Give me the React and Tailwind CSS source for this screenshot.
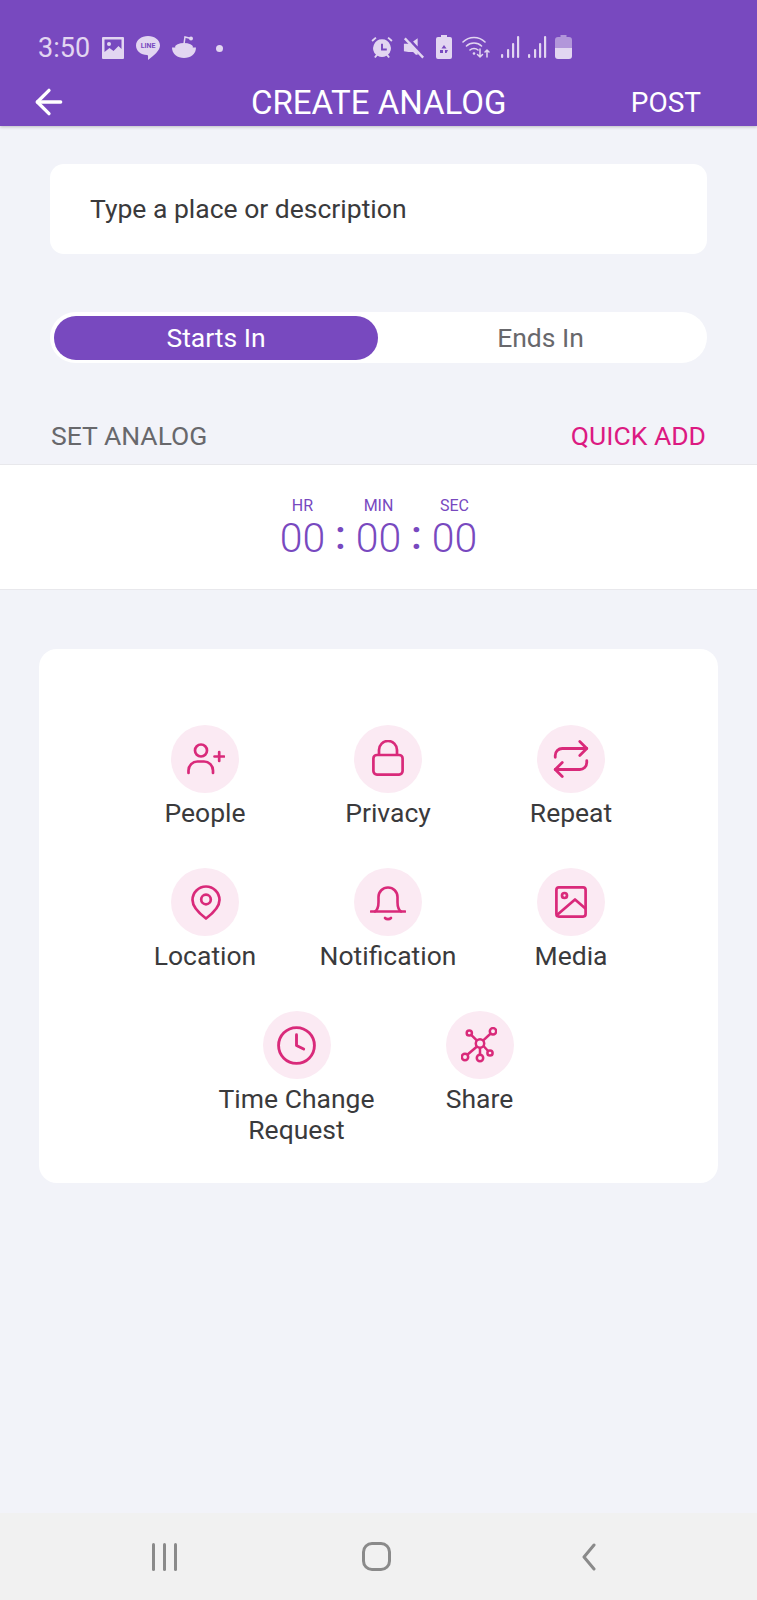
import { ArrowLeft, Clock, Repeat } from "lucide-react";

const ROBOTO = "font-['Roboto',sans-serif]";

function ShareIcon(props) {
  return (
    <svg viewBox="0 0 36 36" fill="none" stroke="currentColor" strokeWidth="2.500" {...props}>
      <circle cx="19" cy="16.500" r="4.200" />
      <circle cx="8.300" cy="6" r="2.600" />
      <circle cx="32" cy="4.300" r="3.200" />
      <circle cx="4" cy="30" r="3.200" />
      <circle cx="19" cy="31" r="3.200" />
      <circle cx="29" cy="26" r="2.600" />
      <path d="M10.200 7.800l5.800 5.800M29.700 6.500l-7.700 7.200M16 19.500L6.300 27.800M19 20.700V27.800M22.500 19l4.600 5" />
    </svg>
  );
}

function PeopleIcon(props) {
  return (
    <svg viewBox="0 0 38 32" fill="none" stroke="currentColor" strokeWidth="2.700" strokeLinecap="round" {...props}>
      <circle cx="14" cy="7.500" r="6" />
      <path d="M1.500 30v-2.500a9 9 0 0 1 9-9h6.500a9 9 0 0 1 9 9V30" />
      <path d="M27.500 13.500h9.500M32.200 9v9" />
    </svg>
  );
}

function LockIcon(props) {
  return (
    <svg viewBox="0 0 32 36" fill="none" stroke="currentColor" strokeWidth="2.700" {...props}>
      <rect x="1.400" y="15" width="29.200" height="19.600" rx="3.500" />
      <path d="M7 15V10a9 9 0 0 1 18 0v5" />
    </svg>
  );
}

function PinIcon(props) {
  return (
    <svg viewBox="0 0 30 35" fill="none" stroke="currentColor" strokeWidth="2.700" strokeLinejoin="round" {...props}>
      <path d="M15 33.500C7 27.500 1.500 21.500 1.500 15a13.500 13.500 0 0 1 27 0c0 6.500-5.500 12.500-13.500 18.500z" />
      <circle cx="15" cy="14.500" r="4.800" />
    </svg>
  );
}

function NotificationIcon(props) {
  return (
    <svg viewBox="0 0 36 36" fill="none" stroke="currentColor" strokeWidth="2.600" strokeLinecap="round" {...props}>
      <path d="M1 26.500h34" />
      <path d="M5 26.500c3-2 3.500-5 3.500-9.500V12a9.500 9.500 0 0 1 19 0v5c0 4.500 .5 7.500 3.500 9.500" />
      <path d="M15 33c1.500 1.500 4.500 1.500 6 0" />
    </svg>
  );
}

function MediaIcon(props) {
  return (
    <svg viewBox="0 0 32 32" fill="none" stroke="currentColor" strokeWidth="2.700" strokeLinejoin="round" {...props}>
      <rect x="1.400" y="1.400" width="29.200" height="29.200" rx="2.500" />
      <circle cx="9.500" cy="9.500" r="2.500" />
      <path d="M2 29L20 13.500 31 23" />
    </svg>
  );
}

const actionRows = [
  { label: "People", icon: <PeopleIcon className="h-[32px] w-[38px] translate-x-[1px]" /> },
  { label: "Privacy", icon: <LockIcon className="h-[36px] w-[32px] -translate-y-[1px]" /> },
  { label: "Repeat", icon: <Repeat className="h-[42px] w-[42px]" strokeWidth={1.6} /> },
  { label: "Location", icon: <PinIcon className="h-[35px] w-[30px] translate-x-[1px]" /> },
  { label: "Notification", icon: <NotificationIcon className="h-[36px] w-[36px] translate-y-[1px]" /> },
  { label: "Media", icon: <MediaIcon className="h-[32px] w-[32px]" /> },
  { label: "Time Change Request", icon: <Clock className="h-[43px] w-[43px]" strokeWidth={1.6} /> },
  { label: "Share", icon: <ShareIcon className="h-[36px] w-[36px] -translate-x-[1px]" /> },
];

function StatusIcons() {
  return (
    <div className="flex items-center text-[#e2d6f1]">
      <svg viewBox="0 0 24 24" className="ml-[370px] h-[23px] w-[24px]" fill="currentColor">
        <path d="M5 1L1 4.500l1.300 1.400 4-3.500zM19 1l4 3.500-1.300 1.400-4-3.500zM12 3.500a9.200 9.200 0 0 0-6.300 15.900L3.800 22l1.500 1 2-2.400a9.200 9.200 0 0 0 9.400 0l2 2.400 1.500-1-1.900-2.600A9.200 9.200 0 0 0 12 3.500z" />
        <path d="M11 8h2v5h4v2h-6z" fill="#7849bf" />
      </svg>
      <svg viewBox="0 0 24 24" className="ml-[9px] h-[23px] w-[22px]" fill="currentColor">
        <path d="M1 8h5l2-1.500 8 10V20h-2l-3-3H6l-5-1zM16 2v9L11 5.500z" />
        <path d="M2 2l20 21" stroke="currentColor" strokeWidth="2.600" />
      </svg>
      <svg viewBox="0 0 18 24" className="ml-[10px] h-[24px] w-[18px]" fill="currentColor">
        <path d="M6 0h6v2h3a2 2 0 0 1 2 2v18a2 2 0 0 1-2 2H3a2 2 0 0 1-2-2V4a2 2 0 0 1 2-2h3z" />
        <path d="M9 10l2.500 3.500h-5zM5 15h3v3H5zM10 15h3l-1.500 3H10z" fill="#7849bf" />
      </svg>
      <svg viewBox="0 0 30 24" className="ml-[9px] h-[24px] w-[30px]" fill="none" stroke="currentColor" strokeWidth="1.600" strokeLinecap="round">
        <path d="M1 7c6-6 16-6 22 0M4.500 11c4-4 11-4 15 0M8 15c2-2 6-2 8 0" />
        <circle cx="12" cy="18.500" r="1.300" fill="currentColor" stroke="none" />
        <path d="M18 14v8m-2.500-2.500L18 22l2.500-2.500M25 22v-7m-2 2l2-2 2 2" strokeWidth="1.500" />
      </svg>
      <svg viewBox="0 0 20 24" className="ml-[8px] h-[24px] w-[20px]" fill="currentColor">
        <rect x="1" y="19" width="2.200" height="4" rx="1" />
        <rect x="7" y="14" width="2.200" height="9" rx="1" />
        <rect x="12" y="8" width="2.200" height="15" rx="1" />
        <rect x="17" y="1" width="2.200" height="22" rx="1" />
      </svg>
      <svg viewBox="0 0 20 24" className="ml-[7px] h-[24px] w-[20px]" fill="currentColor">
        <rect x="1" y="19" width="2.200" height="4" rx="1" />
        <rect x="7" y="14" width="2.200" height="9" rx="1" />
        <rect x="12" y="8" width="2.200" height="15" rx="1" />
        <rect x="17" y="1" width="2.200" height="22" rx="1" />
      </svg>
      <svg viewBox="0 0 17 24" className="ml-[8px] h-[24px] w-[17px]" fill="currentColor">
        <path d="M5.500 0h6v2H14a3 3 0 0 1 3 3v8H0V5a3 3 0 0 1 3-3h2.500z" opacity="0.55" />
        <path d="M0 13h17v8a3 3 0 0 1-3 3H3a3 3 0 0 1-3-3z" />
      </svg>
    </div>
  );
}

function StatusBar() {
  return (
    <div className="flex h-[81px] items-start pt-[34px] text-[#e2d6f1]">
      <span className="ml-[38px] text-[27px] leading-[28px]">3:50</span>
      <svg viewBox="0 0 22 22" className="ml-[12px] mt-[3px] h-[22px] w-[22px]" fill="currentColor">
        <path fillRule="evenodd" d="M1 0h20a1 1 0 0 1 1 1v20a1 1 0 0 1-1 1H1a1 1 0 0 1-1-1V1a1 1 0 0 1 1-1zm1.500 2.500V15l5-4 4 3 5-5 3 3V2.500z" />
        <circle cx="7" cy="7" r="2" />
      </svg>
      <svg viewBox="0 0 24 24" className="ml-[12px] mt-[2px] h-[24px] w-[24px]" fill="currentColor">
        <path d="M12 0c6.600 0 12 3.900 12 9.500 0 5-6 10-12 14.500 0-3 .5-5-1-5C5 19 0 15 0 9.500 0 3.900 5.400 0 12 0z" />
        <text x="12" y="12" textAnchor="middle" fontSize="7" fontWeight="700" fill="#7849bf" fontFamily="Roboto">LINE</text>
      </svg>
      <svg viewBox="0 0 24 24" className="ml-[12px] mt-[2px] h-[24px] w-[24px]" fill="currentColor">
        <path d="M0 11.500h24C24 18 18.500 22 12 22S0 18 0 11.500z" />
        <ellipse cx="12" cy="11" rx="9" ry="4" />
        <path d="M12 8l1-7 5 1.200" fill="none" stroke="currentColor" strokeWidth="1.500" />
        <circle cx="19" cy="2.500" r="2" />
      </svg>
      <span className="ml-[20px] mt-[11px] h-[7px] w-[7px] rounded-full bg-[#e2d6f1]" />
      <div className="absolute top-[35px] left-0">
        <StatusIcons />
      </div>
    </div>
  );
}

function ActionItem({ label, icon }) {
  return (
    <div className="flex w-[183px] flex-col items-center">
      <div className="flex h-[68px] w-[68px] items-center justify-center rounded-full bg-[#fbeaf3] text-[#d92a7a]">
        {icon}
      </div>
      <span className="mt-[4px] w-[165px] text-center text-[26.5px] leading-[31px] text-[#3a3a3c]">{label}</span>
    </div>
  );
}

export default function App() {
  return (
    <main className={`${ROBOTO} relative flex h-[1600px] w-[757px] flex-col overflow-hidden bg-[#f2f3f9]`}>
      <header className="relative z-10 h-[126px] bg-[#7849bf] shadow-[0_1px_3px_rgba(0,0,0,0.22)]">
        <StatusBar />
        <div className="flex h-[43px] items-center text-white">
          <ArrowLeft className="ml-[29px] h-[40px] w-[40px] -translate-y-[1px]" strokeWidth={2} />
          <span className="ml-[182px] text-[33px] leading-[36px]">CREATE ANALOG</span>
          <span className="ml-auto mr-[56px] text-[28px] leading-[36px]">POST</span>
        </div>
      </header>

      <div className="mx-[50px] mt-[38px] flex h-[90px] items-center rounded-[14px] bg-white pl-[40px] text-[26.5px] text-[#3a3a3c]">
        Type a place or description
      </div>

      <div className="mx-[50px] mt-[58px] flex h-[51px] items-center rounded-full bg-white px-[4px] text-[26.5px]">
        <div className="flex h-[44px] w-[324px] items-center justify-center rounded-full bg-[#7849bf] text-white">Starts In</div>
        <div className="flex flex-1 items-center justify-center text-[#68686c]">Ends In</div>
      </div>

      <div className="mx-[51px] mt-[55px] flex h-[36px] items-center justify-between text-[26.5px] leading-[36px]">
        <span className="text-[#68686c]">SET ANALOG</span>
        <span className="text-[#dc1a82]">QUICK ADD</span>
      </div>

      <section className="mt-[10px] flex h-[126px] flex-col items-center border-y border-[#e8e8ec] bg-white pt-[31px] text-[#7849bf]">
        <div className="flex gap-[32px] text-[16px] leading-[20px]">
          <span className="w-[44px] text-center">HR</span>
          <span className="w-[44px] text-center">MIN</span>
          <span className="w-[44px] text-center">SEC</span>
        </div>
        <div className="flex items-center text-[41px] font-light leading-[44px]">
          <span className="w-[46px] text-center">00</span>
          <span className="w-[30px] -translate-y-[3px] text-center font-medium">:</span>
          <span className="w-[46px] text-center">00</span>
          <span className="w-[30px] -translate-y-[3px] text-center font-medium">:</span>
          <span className="w-[46px] text-center">00</span>
        </div>
      </section>

      <section className="mx-[39px] mt-[59px] flex flex-wrap justify-center gap-y-[40px] rounded-[18px] bg-white pb-[38px] pl-[19px] pt-[76px]">
        {actionRows.map((action) => (
          <ActionItem key={action.label} label={action.label} icon={action.icon} />
        ))}
      </section>

      <nav className="mt-auto flex h-[87px] items-center bg-[#f1f1f1] text-[#8a8a8a]">
        <div className="ml-[152px] flex h-[28px] gap-[8px]">
          <span className="w-[3px] rounded-full bg-[#8a8a8a]" />
          <span className="w-[3px] rounded-full bg-[#8a8a8a]" />
          <span className="w-[3px] rounded-full bg-[#8a8a8a]" />
        </div>
        <div className="ml-[185px] h-[29px] w-[29px] rounded-[10px] border-[3px] border-[#8a8a8a]" />
        <svg viewBox="0 0 14 28" className="ml-[190px] h-[28px] w-[16px]" fill="none" stroke="currentColor" strokeWidth="3" strokeLinecap="round" strokeLinejoin="round">
          <path d="M12 2L2 14l10 12" />
        </svg>
      </nav>
    </main>
  );
}
